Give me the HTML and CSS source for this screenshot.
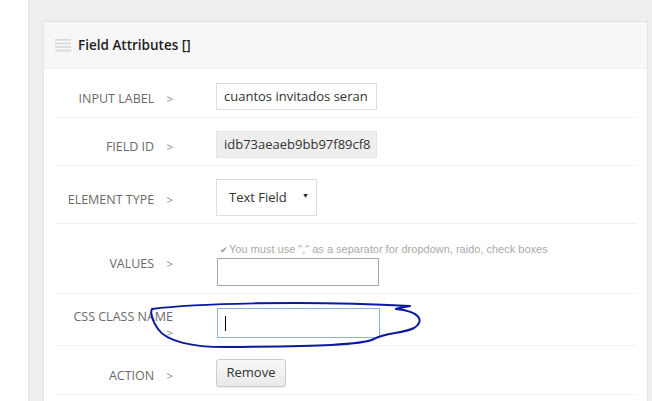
FILE: index.html
```html
<!DOCTYPE html>
<html>
<head>
<meta charset="utf-8">
<link rel="stylesheet" href="styles.css">
</head>
<body>
<div class="wrap">
  <div class="panel">
    <div class="panel-head">
      <svg class="menu-icon" width="16" height="13" viewBox="0 0 16 13">
        <rect x="0" y="0" width="16" height="1.6" fill="#d6d6d6"/>
        <rect x="0" y="3.6" width="16" height="1.6" fill="#d6d6d6"/>
        <rect x="0" y="7.2" width="16" height="1.6" fill="#d6d6d6"/>
        <rect x="0" y="10.8" width="16" height="1.6" fill="#d6d6d6"/>
      </svg>
      <span class="title">Field Attributes []</span>
    </div>
    <div class="panel-body">
      <div class="row">
        <div class="label">INPUT LABEL <span class="gt">&gt;</span></div>
        <div class="field"><div class="input">cuantos invitados seran</div></div>
      </div>
      <div class="row">
        <div class="label">FIELD ID <span class="gt">&gt;</span></div>
        <div class="field"><div class="input readonly">idb73aeaeb9bb97f89cf8</div></div>
      </div>
      <div class="row">
        <div class="label">ELEMENT TYPE <span class="gt">&gt;</span></div>
        <div class="field"><div class="select"><span>Text Field</span><span class="arrow">&#9660;</span></div></div>
      </div>
      <div class="row">
        <div class="label">VALUES <span class="gt">&gt;</span></div>
        <div class="field column">
          <div class="hint"><span class="check">&#10004;</span>You must use "," as a separator for dropdown, raido, check boxes</div>
          <div class="input plain"></div>
        </div>
      </div>
      <div class="row">
        <div class="label">CSS CLASS NAME <span class="gt">&gt;</span></div>
        <div class="field"><div class="input focus"><span class="caret"></span></div></div>
      </div>
      <div class="row">
        <div class="label">ACTION <span class="gt">&gt;</span></div>
        <div class="field"><div class="button">Remove</div></div>
      </div>
    </div>
  </div>
</div>
<svg class="scribble" width="652" height="401" viewBox="0 0 652 401">
  <path d="M152,309 C190,304 300,300 410,306 C404,307 398,308 396,309 C418,311 426,320 414,328 C402,334 386,332 374,339 C360,346 300,346 232,347 C192,348 166,341 158,329 C152,320 150,313 152,309" fill="none" stroke="#0c1a9c" stroke-width="2" stroke-linejoin="round" stroke-linecap="round"/>
</svg>
</body>
</html>
```

FILE: styles.css
```css
html, body {
  margin: 0;
  padding: 0;
  background: #ffffff;
  overflow: hidden;
  width: 652px;
  height: 401px;
}
body {
  position: relative;
  font-family: "Open Sans", "Liberation Sans", sans-serif;
}
.wrap {
  margin-left: 28px;
  background: #eeeeee;
  border-left: 1px solid #e2e2e2;
  padding: 21px 4px 0 14px;
  height: 400px;
}
.panel {
  background: #ffffff;
  border: 1px solid #e3e3e3;
  border-bottom: none;
  height: 400px;
}
.panel-head {
  height: 46px;
  background: #f7f7f7;
  border-bottom: 1px solid #efefef;
  display: flex;
  align-items: center;
  padding-left: 11px;
}
.menu-icon {
  margin-right: 7px;
  margin-top: 1px;
}
.title {
  font-weight: 600;
  font-size: 13.5px;
  color: #1e1e1e;
}
.panel-body {
  padding: 1px 10px 0 12px;
}
.row {
  display: flex;
  align-items: center;
  padding: 13px 0 7px;
  border-bottom: 1px solid #f1f1f1;
}
.label {
  width: 117px;
  flex: none;
  text-align: right;
  margin: 2px 43px -3px 0;
  font-size: 12.5px;
  line-height: 16px;
  color: #6a6a6a;
}
.gt {
  display: inline-block;
  margin-left: 9px;
  font-size: 11.5px;
  color: #888888;
}
.field {
  display: flex;
}
.field.column {
  flex-direction: column;
}
.input {
  box-sizing: border-box;
  width: 161px;
  height: 27px;
  border: 1px solid #dddddd;
  padding: 0 7px;
  font-size: 13px;
  line-height: 25px;
  color: #333333;
  white-space: nowrap;
  overflow: hidden;
  background: #ffffff;
}
.input.readonly {
  background: #eeeeee;
  border-color: #e3e3e3;
}
.input.plain {
  width: 162px;
  height: 28px;
  border-color: #a9a9a9;
  margin-left: 1px;
}
.input.focus {
  width: 163px;
  height: 30px;
  border-color: #8fb0dc;
  margin-left: 1px;
  margin-top: 1px;
  display: flex;
  align-items: center;
}
.caret {
  display: block;
  width: 1px;
  height: 15px;
  background: #000000;
}
.select {
  box-sizing: border-box;
  width: 101px;
  height: 37px;
  border: 1px solid #dddddd;
  display: flex;
  align-items: center;
  justify-content: space-between;
  padding: 0 7px 2px 12px;
  font-size: 13px;
  color: #333333;
}
.arrow {
  font-size: 7px;
  color: #222222;
  margin-top: -3px;
}
.hint {
  font-family: "Liberation Sans", Arial, sans-serif;
  font-size: 11px;
  line-height: 16px;
  color: #aaaaaa;
  padding-left: 4px;
  padding-top: 4px;
  white-space: nowrap;
}
.check {
  font-size: 9px;
  color: #999999;
  margin-right: 1px;
}
.button {
  box-sizing: border-box;
  width: 70px;
  height: 28px;
  border: 1px solid #cccccc;
  border-radius: 3px;
  background: linear-gradient(#f8f8f8, #e9e9e9);
  box-shadow: 0 1px 1px rgba(0,0,0,0.08);
  font-size: 13px;
  line-height: 25px;
  color: #333333;
  text-align: center;
}
.scribble {
  position: absolute;
  left: 0;
  top: 0;
  pointer-events: none;
}
```
